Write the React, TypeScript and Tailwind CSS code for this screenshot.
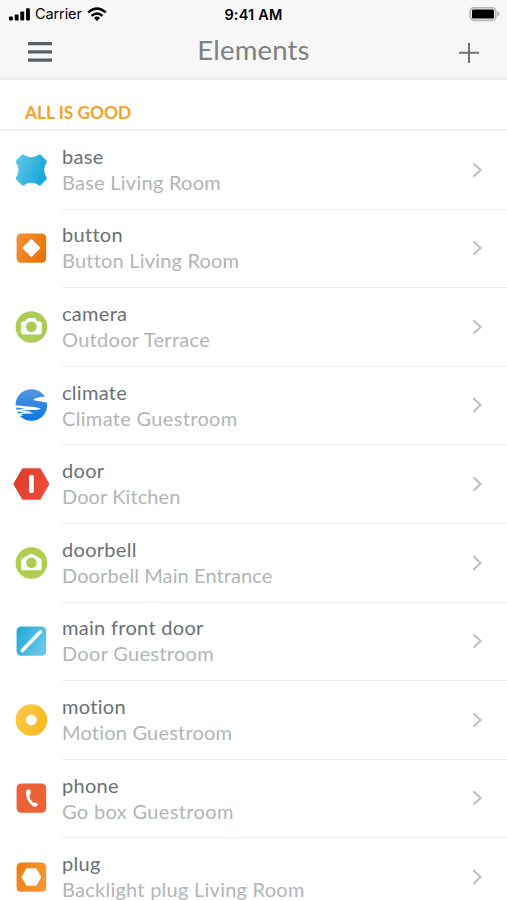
import type { ReactNode } from "react";

function Tile({ id, from, to, children }: { id: string; from: string; to: string; children?: ReactNode }) {
  return (
    <>
      <defs>
        <linearGradient id={id} x1="0" y1="0" x2="1" y2="0.5">
          <stop offset="0" stopColor={from} />
          <stop offset="1" stopColor={to} />
        </linearGradient>
      </defs>
      <rect x="3.6" y="3.4" width="29.6" height="29.4" rx="4.6" fill={`url(#${id})`} />
      {children}
    </>
  );
}

const base = (
  <>
    <defs>
      <linearGradient id="base" x1="0" y1="0" x2="1" y2="0.4">
        <stop offset="0" stopColor="#65c8e8" />
        <stop offset="1" stopColor="#17a9d9" />
      </linearGradient>
    </defs>
    <path
      d="M9.2 2.6Q10 2 10.8 2.8Q18.3 7.6 25.8 2.8Q26.6 2 27.4 2.6L33.2 8.2Q34.3 9.3 33.6 10.2Q28.8 17.8 33.6 25.6Q34.3 26.7 33.2 27.8L27.6 33.2Q26.6 34 25.8 33.2Q18.3 28.4 10.8 33.2Q10 34 9 33.2L3.4 27.8Q2.3 26.7 3 25.6Q7.8 17.8 3 10.2Q2.3 9.3 3.4 8.2Z"
      fill="url(#base)"
    />
  </>
);

const button = (
  <Tile id="button" from="#f59236" to="#e8740a">
    <path d="M18.4 9.8L26.7 18L18.4 26.2L10.1 18Z" fill="#fff" stroke="#fff" strokeWidth="1.4" strokeLinejoin="round" />
  </Tile>
);

const camera = (
  <>
    <circle cx="18.4" cy="18" r="15.8" fill="#afcb57" />
    <path
      d="M8 14.4Q8 12.6 9.8 12.4L12.6 12L14.4 9.5Q14.8 9 15.5 9H21.3Q22 9 22.4 9.5L24.2 12L27 12.4Q28.8 12.6 28.8 14.4V23.6Q28.8 25.4 27 25.4H9.8Q8 25.4 8 23.6Z"
      fill="#fff"
    />
    <circle cx="18.4" cy="17.8" r="5.4" fill="#afcb57" />
  </>
);

const doorbell = (
  <>
    <circle cx="18.4" cy="18" r="15.8" fill="#b1cc4e" />
    <path
      d="M8.2 15.1Q8.2 14 9.2 13.5L17.3 9.1Q18.4 8.5 19.5 9.1L27.6 13.5Q28.6 14 28.6 15.1V23.4Q28.6 25.2 26.8 25.2H10Q8.2 25.2 8.2 23.4Z"
      fill="#fff"
    />
    <circle cx="18.4" cy="17.8" r="5.3" fill="#b1cc4e" />
  </>
);

const climate = (
  <>
    <defs>
      <linearGradient id="climate" x1="0" y1="0" x2="0" y2="1">
        <stop offset="0" stopColor="#5796e3" />
        <stop offset="1" stopColor="#0878df" />
      </linearGradient>
    </defs>
    <circle cx="18.4" cy="18" r="15.8" fill="url(#climate)" />
    <path d="M32.4 9.4C27 9.8 21.6 10.8 20.6 12.4C20.4 13.8 28 14 34.4 15.6L35 10Z" fill="#fff" />
    <path d="M1.8 18C9 19.6 23 19 28 21.8C25 23.4 14 23 8.5 23.8L16 24.6L20.6 26.2C16 26.8 11 26.2 8 27.2L10.4 28.6L6.6 29L5 27L2 23Z" fill="#fff" />
    <path d="M2.9 20.4L11.5 21.4L7.5 22.4L3.5 22.8Z" fill="#3b8be3" />
    <path d="M4.3 24.6L11.5 25L7.5 26L5.1 26.4Z" fill="#2480df" />
  </>
);

const door = (
  <>
    <defs>
      <linearGradient id="door" x1="0" y1="0" x2="1" y2="0.4">
        <stop offset="0" stopColor="#d83b2c" />
        <stop offset="1" stopColor="#ee4b38" />
      </linearGradient>
    </defs>
    <path d="M10 3H26.8L35.6 18L26.8 33H10L1.2 18Z" fill="url(#door)" stroke="url(#door)" strokeWidth="1.6" strokeLinejoin="round" />
    <rect x="16" y="9" width="4.8" height="18" rx="1.6" fill="#fff" />
  </>
);

const frontDoor = (
  <Tile id="front-door" from="#1ba8d8" to="#69c6e7">
    <path d="M9.3 27.5L27.5 8.8" stroke="#fff" strokeWidth="3.6" strokeLinecap="round" />
  </Tile>
);

const motion = (
  <>
    <defs>
      <linearGradient id="motion" x1="0" y1="0" x2="1" y2="0.3">
        <stop offset="0" stopColor="#fcca4b" />
        <stop offset="1" stopColor="#f9bb22" />
      </linearGradient>
    </defs>
    <circle cx="18.4" cy="18" r="15.8" fill="url(#motion)" />
    <circle cx="18.4" cy="18" r="5.4" fill="#fff" />
  </>
);

const phone = (
  <Tile id="phone" from="#ec5f35" to="#e9633a">
    <path
      d="M15.3 9.6C13.2 9.7 12.6 11.5 13 14.3C13.6 19.3 16.4 24.2 20.6 26.4C22.6 27.2 24.5 26.1 24.8 24.2Q24.8 23.4 24 23.1L21.6 22.4Q20.9 22.2 20.3 22.9C18 21 16.5 18 16.3 15.1Q17.5 15 17.5 14L17.6 10.8Q17.6 9.7 16.5 9.6Z"
      fill="#fff"
    />
  </Tile>
);

const plug = (
  <Tile id="plug" from="#ee7b0d" to="#f69735">
    <path d="M14 10.1H22.8L27.3 18L22.8 25.9H14L9.5 18Z" fill="#fff" stroke="#fff" strokeWidth="1.8" strokeLinejoin="round" />
  </Tile>
);

const elements = [
  { name: "base", detail: "Base Living Room", icon: base, tracking: "tracking-[0.25px]" },
  { name: "button", detail: "Button Living Room", icon: button, tracking: "tracking-[0.2px]" },
  { name: "camera", detail: "Outdoor Terrace", icon: camera, tracking: "tracking-[0.3px]" },
  { name: "climate", detail: "Climate Guestroom", icon: climate, tracking: "tracking-[0.33px]" },
  { name: "door", detail: "Door Kitchen", icon: door, tracking: "tracking-[0.1px]" },
  { name: "doorbell", detail: "Doorbell Main Entrance", icon: doorbell, tracking: "tracking-[0.1px]" },
  { name: "main front door", detail: "Door Guestroom", icon: frontDoor, tracking: "tracking-[0.3px]" },
  { name: "motion", detail: "Motion Guestroom", icon: motion, tracking: "tracking-[0.2px]" },
  { name: "phone", detail: "Go box Guestroom", icon: phone, tracking: "tracking-[0.35px]" },
  { name: "plug", detail: "Backlight plug Living Room", icon: plug, tracking: "tracking-[0.25px]" },
];

function StatusBar() {
  return (
    <div className="grid h-7 grid-cols-3 items-center pr-[7px] pl-[9px] font-['Inter','Liberation_Sans',sans-serif] text-black">
      <div className="flex items-center">
        <svg className="h-[13px] w-[21px]" viewBox="0 0 21 13">
          <rect x="0" y="8.6" width="3.9" height="4" rx="1" />
          <rect x="5.7" y="6.4" width="3.9" height="6.2" rx="1" />
          <rect x="11.3" y="3.4" width="3.9" height="9.2" rx="1" />
          <rect x="17" y="0.2" width="3.9" height="12.4" rx="1" />
        </svg>
        <span className="ml-[5px] text-[14.5px] tracking-[-0.1px]">Carrier</span>
        <svg className="ml-[5px] h-[14px] w-[20px]" viewBox="0 0 20 14" fill="none" stroke="#000" strokeWidth="2.4">
          <path d="M1.2 5.4Q10 -2.4 18.8 5.4" />
          <path d="M4.5 8.8Q10 4 15.5 8.8" />
          <path d="M6.9 10.9Q10 8.3 13.1 10.9L10 14Z" fill="#000" stroke="none" />
        </svg>
      </div>
      <span className="-ml-[2px] pt-0.5 text-center text-[14.5px] font-semibold tracking-[0.2px] whitespace-nowrap">9:41 AM</span>
      <svg className="h-[15px] w-[31px] justify-self-end" viewBox="0 0 31 15">
        <rect x="1.2" y="0.6" width="25.6" height="12.8" rx="3.8" fill="#eee" stroke="#b5b5b5" strokeWidth="1.6" />
        <rect x="3" y="2.4" width="22" height="9.2" rx="1.4" />
        <path d="M28.4 4.6Q30.6 5.4 30.6 7T28.4 9.4Z" fill="#b5b5b5" />
      </svg>
    </div>
  );
}

export default function App() {
  return (
    <div className="h-[900px] overflow-hidden bg-white font-['Lato','Open_Sans',sans-serif]">
      <header className="h-[80px] border-b-2 border-[#ebebeb] bg-[#f7f7f7]">
        <StatusBar />
        <div className="grid h-[50px] grid-cols-[60px_1fr_60px] text-[#7b8284]">
          <svg className="mt-[14px] ml-7 h-5 w-6" viewBox="0 0 24 20" fill="#566063">
            <rect y="0" width="24" height="3.3" rx="0.6" />
            <rect y="8.2" width="24" height="3.3" rx="0.6" />
            <rect y="16.4" width="24" height="3.3" rx="0.6" />
          </svg>
          <h1 className="mt-1 text-center text-[27.5px] leading-9 font-normal tracking-[0.2px]">Elements</h1>
          <svg className="mt-[15px] ml-[12px] h-5 w-5" viewBox="0 0 20 20" stroke="#6b7376" strokeWidth="2">
            <path d="M0 9.8H20M10 0V20" />
          </svg>
        </div>
      </header>
      <h2 className="h-[51px] border-b-2 border-[#efefef] pt-[21px] pl-[25px] text-[17.3px] leading-6 font-bold text-[#f7a024]">
        ALL IS GOOD
      </h2>
      <ul>
        {elements.map(({ name, detail, icon, tracking }) => (
          <li key={name} className="flex h-[78.6px] pl-[13px]">
            <svg className="mt-[20.6px] h-9 w-9 shrink-0" viewBox="0 0 36 36">
              {icon}
            </svg>
            <div className="ml-[13px] flex flex-1 border-b-[1.6px] border-[#ececec]">
              <div className="flex-1 pt-[11.9px] text-[20px] leading-[26px] whitespace-nowrap [font-variant-ligatures:none]">
                <p className="tracking-[0.3px] text-[#6a7174]">{name}</p>
                <p className={`text-[#b0b5b8] ${tracking}`}>{detail}</p>
              </div>
              <svg className="mt-[30.6px] mr-[24px] h-4 w-[11px]" viewBox="0 0 11 16" fill="none" stroke="#bfbfbf" strokeWidth="2.1">
                <path d="M1.4 1.2L8.6 8L1.4 14.8" />
              </svg>
            </div>
          </li>
        ))}
      </ul>
    </div>
  );
}
